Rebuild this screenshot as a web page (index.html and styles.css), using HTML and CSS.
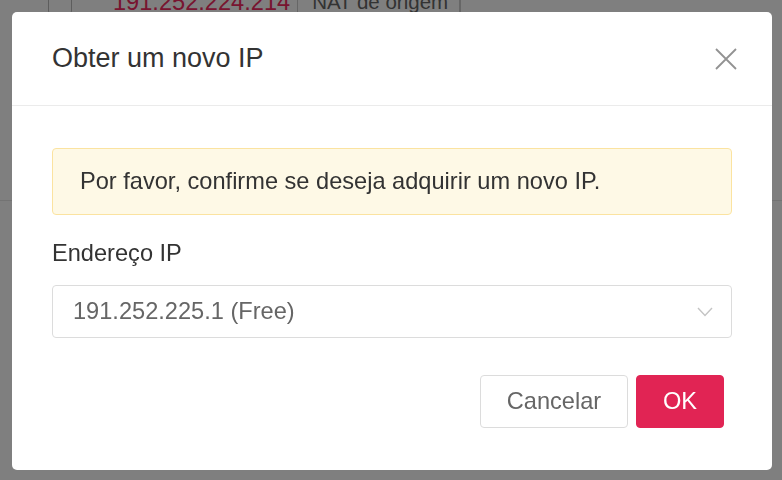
FILE: index.html
```html
<!DOCTYPE html>
<html>
<head>
    <link rel="stylesheet" href="styles.css">
  </head>
  <body>
    <div class="page">
      <div class="ip-row">
        <span class="check"></span>
        <span class="cell ip-cell">191.252.224.214</span>
        <span class="cell nat-cell">NAT de origem</span>
        <span class="cell empty-cell"></span>
      </div>
      <div class="page-line"></div>
    </div>

    <div class="overlay">
      <div class="modal">
        <div class="modal-header">
          <h2>Obter um novo IP</h2>
          <button class="close" aria-label="Fechar">
            <svg width="22" height="22" viewBox="0 0 22 22">
              <path d="M1 1 L21 21 M21 1 L1 21" stroke="#929292" stroke-width="1.8" fill="none" />
            </svg>
          </button>
        </div>
        <div class="modal-body">
          <div class="alert">Por favor, confirme se deseja adquirir um novo IP.</div>
          <label class="field-label">Endereço IP</label>
          <div class="select">
            <span>191.252.225.1 (Free)</span>
            <svg width="16" height="10" viewBox="0 0 16 10">
              <path d="M1 1 L8 8.5 L15 1" stroke="#c4c4c4" stroke-width="1.4" fill="none" />
            </svg>
          </div>
          <div class="actions">
            <button class="btn btn-cancel">Cancelar</button>
            <button class="btn btn-ok">OK</button>
          </div>
        </div>
      </div>
    </div>
  </body>
</html>
```

FILE: styles.css
```css
* {
    box-sizing: border-box;
  }

  body {
    margin: 0;
    font-family: "Liberation Sans", Arial, sans-serif;
    background-color: #fff;
    color: #333;
    overflow: hidden;
  }

  .page {
    height: 480px;
  }

  .ip-row {
    display: flex;
    align-items: center;
    height: 40px;
    margin-top: -18px;
    padding-left: 48px;
    font-size: 23.6px;
  }

  .check {
    width: 24px;
    height: 24px;
    border: 1px solid #bbb;
    border-radius: 3px;
    margin-right: 41px;
  }

  .cell {
    height: 40px;
    line-height: 40px;
    border-right: 1px solid #ccc;
  }

  .ip-cell {
    color: #f02a60;
    padding-right: 7px;
  }

  .nat-cell {
    color: #666;
    font-size: 20.5px;
    padding: 0 11px 0 14px;
  }

  .page-line {
    height: 1px;
    background-color: #e6e6e6;
    margin-top: 178px;
  }

  .overlay {
    position: fixed;
    inset: 0;
    background-color: rgba(0, 0, 0, 0.5);
    padding: 12px 10px 10px 12px;
    display: flex;
  }

  .modal {
    width: 760px;
    height: 458px;
    background-color: #fff;
    border-radius: 5px;
    display: flex;
    flex-direction: column;
  }

  .modal-header {
    height: 94px;
    display: flex;
    align-items: center;
    justify-content: space-between;
    padding: 0 35px 0 40px;
    border-bottom: 1px solid #ebebeb;
  }

  .modal-header h2 {
    margin: 0;
    font-size: 27px;
    font-weight: normal;
    color: #333;
  }

  .close {
    background: none;
    border: none;
    padding: 0;
    display: flex;
    cursor: pointer;
  }

  .modal-body {
    padding: 42px 40px 0 40px;
    display: flex;
    flex-direction: column;
  }

  .alert {
    height: 67px;
    background-color: #fef9e6;
    border: 1px solid #fbe3a0;
    border-radius: 4px;
    padding: 0 27px;
    display: flex;
    align-items: center;
    font-size: 23.6px;
    color: #333;
  }

  .field-label {
    margin-top: 23px;
    font-size: 23.6px;
    line-height: 30px;
    color: #333;
  }

  .select {
    margin-top: 17px;
    height: 53px;
    border: 1px solid #dcdcdc;
    border-radius: 4px;
    display: flex;
    align-items: center;
    justify-content: space-between;
    padding: 0 18px 0 20px;
    font-size: 23.6px;
    color: #666;
  }

  .actions {
    margin-top: 37px;
    display: flex;
    justify-content: flex-end;
    gap: 8px;
    padding-right: 8px;
  }

  .btn {
    height: 53px;
    border-radius: 4px;
    font-family: "Liberation Sans", Arial, sans-serif;
    font-size: 23.6px;
    cursor: pointer;
  }

  .btn-cancel {
    width: 148px;
    background-color: #fff;
    border: 1px solid #dcdcdc;
    color: #666;
  }

  .btn-ok {
    width: 88px;
    background-color: #e12454;
    border: 1px solid #e12454;
    color: #fff;
  }
```
